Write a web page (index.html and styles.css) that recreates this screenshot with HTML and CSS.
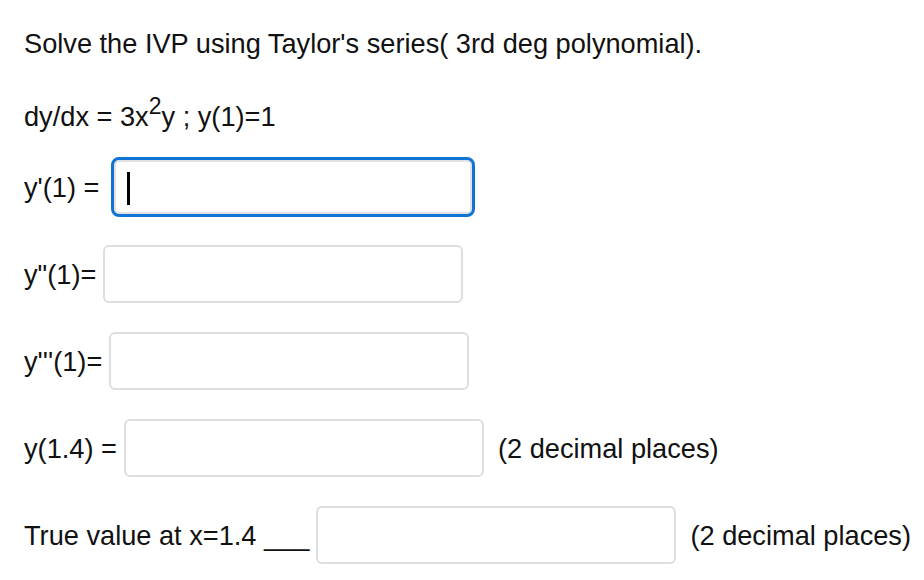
FILE: index.html
```html
<!DOCTYPE html>
<html lang="en">
<head>
<meta charset="utf-8">
<title>Taylor series IVP</title>
<link rel="stylesheet" href="styles.css">
</head>
<body>
<main class="question">
  <p class="title">Solve the IVP using Taylor's series( 3rd deg polynomial).</p>
  <p class="equation">dy/dx = 3x<sup class="exp">2</sup>y ; y(1)=1</p>
  <div class="rows">
    <div class="row row-focus">
      <span class="label">y'(1) =</span>
      <span class="field-wrap">
        <input class="field field-focus" type="text" aria-label="y'(1)">
        <span class="caret"></span>
      </span>
    </div>
    <div class="row">
      <span class="label">y"(1)=</span>
      <input class="field" type="text" aria-label="y''(1)">
    </div>
    <div class="row">
      <span class="label">y'''(1)=</span>
      <input class="field" type="text" aria-label="y'''(1)">
    </div>
    <div class="row">
      <span class="label">y(1.4) =</span>
      <input class="field" type="text" aria-label="y(1.4)">
      <span class="note">(2 decimal places)</span>
    </div>
    <div class="row">
      <span class="label">True value at x=1.4 ___</span>
      <input class="field" type="text" aria-label="True value at x=1.4">
      <span class="note">(2 decimal places)</span>
    </div>
  </div>
</main>
</body>
</html>
```
FILE: styles.css
```css
html, body {
  margin: 0;
  padding: 0;
  background: #ffffff;
}

body {
  font-family: "Liberation Sans", Arial, sans-serif;
  font-size: 27.2px;
  color: #111111;
}

.question {
  padding: 28px 0 0 24px;
}

.title {
  margin: 0;
  height: 32px;
  line-height: 32px;
  white-space: nowrap;
}

.equation {
  margin: 41px 0 0 0;
  height: 32px;
  line-height: 32px;
  white-space: nowrap;
}

.exp {
  font-size: 23px;
  line-height: 0;
  vertical-align: 12px;
}

.rows {
  display: flex;
  flex-direction: column;
  gap: 29px;
  margin-top: 25px;
}

.row {
  display: flex;
  align-items: center;
  gap: 7px;
  height: 58px;
  white-space: nowrap;
}

.row-focus {
  gap: 12px;
}

.label {
  line-height: 31px;
}

.field {
  box-sizing: border-box;
  width: 360px;
  height: 58px;
  margin: 0;
  padding: 0 14px;
  border: 2px solid #dedede;
  border-radius: 6px;
  background: #ffffff;
  font: inherit;
  outline: none;
}

.field-wrap {
  position: relative;
  display: block;
  height: 60px;
}

.field-focus {
  width: 364px;
  height: 60px;
  border: 3px solid #0f74d3;
  border-radius: 8px;
  box-shadow: inset 0 0 0 2px #e2e2e2;
}

.caret {
  position: absolute;
  left: 16px;
  top: 15px;
  width: 3px;
  height: 33px;
  background: #000000;
}

.note {
  margin-left: 7px;
  line-height: 31px;
}
```
